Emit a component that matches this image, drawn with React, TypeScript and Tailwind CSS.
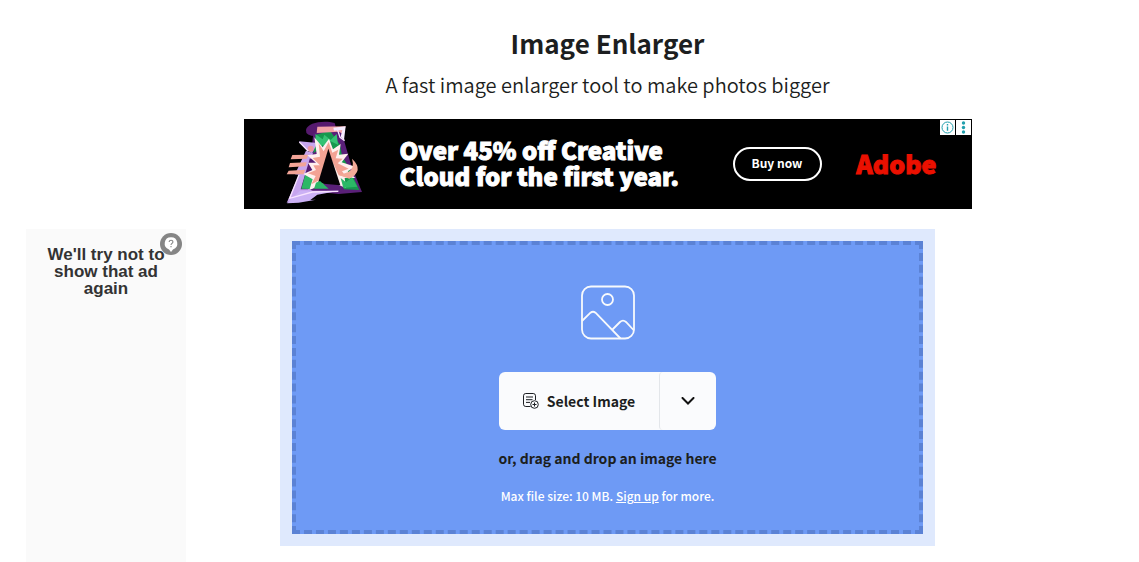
import type { ReactNode } from "react";

function BannerArt() {
  return (
    <svg viewBox="0 0 300 300" className="h-[100px] w-[100px] shrink-0" aria-hidden="true">
      <path d="M78 48C82 26 130 18 164 27L168 42L112 48L108 66Q76 66 78 48Z" fill="#561a6e" />
      <path d="M100 58L182 44L214 155L246 234L176 240L58 228L92 130Z" fill="#5a2078" />
      <path d="M108 62L150 50L180 92L186 125L205 158L238 228L192 226L150 82L100 118Z" fill="#16984e" />
      <path d="M106 60L128 76L133 62L152 78L170 60L174 92L152 82L137 104L128 92L112 116Z" fill="#35c274" />
      <path d="M112 38L197 37L190 60L176 53L110 57Z" fill="#f3a3a7" />
      <path d="M160 41L197 37L192 78L182 68L187 48L162 50Z" fill="#f6ecff" />
      <path d="M57 82L113 87L96 118L80 108Z" fill="#c7a5ee" />
      <path d="M78 110L99 117L66 215L112 238L45 253L20 267L57 182L45 181Z" fill="#c7a5ee" />
      <path d="M37 123L85 122L80 134L32 136ZM30 147L80 145L77 157L26 160ZM26 170L76 167L71 181L20 181Z" fill="#f2a497" />
      <path d="M90 132L107 153L84 226L62 226Z" fill="#541b70" />
      <path d="M77 177L105 190L99 225L64 224Z" fill="#2bb866" />
      <path d="M103 70L128 100L147 74L159 106L182 90L177 122L205 119L185 145L226 158L203 172L226 192L194 192L198 222L176 213L150 140L120 197L132 210L88 228L98 196L70 180L97 168L84 146L108 146L82 124L110 120Z" fill="#fff0ef" />
      <path d="M116 88L131 112L146 84L157 116L175 107L167 133L188 134L173 148L206 164L186 172L198 188L176 184L148 122L118 199L94 211L107 186L84 178L108 168L100 154L120 154L98 132L120 128Z" fill="#f3a294" />
      <path d="M145 104L181 214L114 208Z" fill="#050206" />
      <path d="M216 134Q254 170 208 194L178 184L205 174Q225 162 216 134Z" fill="#f4aa98" />
      <path d="M182 192L198 205L216 190L232 218L190 222Z" fill="#2bb866" />
      <path d="M60 230L178 230L112 242L91 258L108 257L56 266L21 268Z" fill="#cbb1f5" />
      <circle cx="92" cy="104" r="9" fill="#ee98a1" />
      <path d="M108 206L120 201L146 224L102 224Z" fill="#2bb866" />
      <path d="M58 84L85 112M57 182L29 253L97 234L175 232M171 42L180 70L194 80" fill="none" stroke="#f8e3ff" strokeWidth="4" />
    </svg>
  );
}

function AdBanner() {
  return (
    <section
      aria-label="Advertisement"
      className="relative flex h-[90px] w-full max-w-[728px] items-center overflow-hidden bg-black pr-[35px] pl-9 text-white"
    >
      <BannerArt />
      <p className="ml-5 w-[333px] pb-0.5 text-[24px] leading-[26px] font-black whitespace-nowrap [-webkit-text-stroke:1px_white]">
        Over 45% off Creative
        <br />
        Cloud for the first year.
      </p>
      <button
        type="button"
        className="h-[34px] w-[89px] shrink-0 rounded-full border-2 border-white pb-0.5 text-[12px] leading-none font-bold"
      >
        Buy now
      </button>
      <span className="ml-auto pb-0.5 text-[25px] leading-none font-black text-[#eb1000] [-webkit-text-stroke:1px_#eb1000]">
        Adobe
      </span>
      <div className="absolute top-px right-px flex h-[15px] gap-px">
        <button type="button" aria-label="About this ad" className="w-[15px] bg-white">
          <svg viewBox="0 0 15 15" className="size-[15px]">
            <circle cx="7.5" cy="7.5" r="5.5" fill="none" stroke="#22a0ae" />
            <path d="M7.5 6.5v4.2M7.5 4v1.4" stroke="#22a0ae" strokeWidth="1.4" />
          </svg>
        </button>
        <button type="button" aria-label="Ad options" className="w-[15px] bg-white">
          <svg viewBox="0 0 15 15" className="size-[15px]" fill="#22a0ae">
            <circle cx="7.5" cy="3" r="1.7" />
            <circle cx="7.5" cy="7.5" r="1.7" />
            <circle cx="7.5" cy="12" r="1.7" />
          </svg>
        </button>
      </div>
    </section>
  );
}

function SideNotice() {
  return (
    <aside className="relative bg-[#fafafa] px-5 pt-[17px] text-center font-['Liberation_Sans',Arial,sans-serif]">
      <p className="text-[17px] leading-[17px] font-bold text-[#333]">We'll try not to show that ad again</p>
      <button type="button" aria-label="Why this ad?" className="absolute top-1 right-1">
        <svg viewBox="0 0 22 22" className="size-[22px]">
          <circle cx="11" cy="11" r="11" fill="#858585" />
          <path d="M11 4.3a6.2 6.2 0 0 0-2 12.1l2 2.6 2-2.6a6.2 6.2 0 0 0-2-12.1Z" fill="#fff" />
          <path d="M9.2 9c0-2.4 3.8-2.3 3.7 0 0 1.4-1.9 1.4-1.9 3M11 13v1.2" fill="none" stroke="#858585" strokeWidth="1.1" />
        </svg>
      </button>
    </aside>
  );
}

function PictureIcon() {
  return (
    <svg viewBox="0 0 56 56" className="size-14" fill="none" stroke="#f8fafc" strokeWidth="1.8" aria-hidden="true">
      <rect x="2" y="1.5" width="52" height="52" rx="9" />
      <circle cx="27.5" cy="14.5" r="5.5" />
      <path d="M2 36 10.500 27.700q2.500-2 5 0L40.500 53.500M32 45l8-8q3-2.700 6 0l8 8.500" />
    </svg>
  );
}

function AddFileIcon() {
  return (
    <svg viewBox="0 0 16 16" className="size-4" fill="none" stroke="#1c1f23" aria-hidden="true">
      <path d="M7.500 13.500H2.800Q.500 13.500 .500 11.200V2.800Q.500.500 2.800.500h7.400q2.300 0 2.300 2.300V7M3 4h7M3 6.700h6.500M3 9.400h4" />
      <circle cx="11.500" cy="11.500" r="3.800" />
      <path d="M11.500 9.500v4M9.500 11.500h4" />
    </svg>
  );
}

function DropZone({ children }: { children: ReactNode }) {
  return (
    <div className="w-full max-w-[655px] bg-[#dfe9fd] p-3">
      <div className="flex flex-col items-center border-4 border-dashed border-[#5b82d5] bg-[#6e9af5] pt-10 pb-6">
        {children}
      </div>
    </div>
  );
}

export default function App() {
  return (
    <div className="grid min-h-screen grid-cols-[160px_1fr] grid-rows-[auto_1fr] pr-[110px] pl-[26px] font-['Noto_Sans_CJK_SC','Source_Sans_3',sans-serif] text-[#1c1e20]">
      <header className="col-start-2 flex flex-col items-center pt-6">
        <h1 className="text-[26px] leading-[38px] font-bold">Image Enlarger</h1>
        <p className="mt-1.5 text-[20px] leading-[34px] font-[350]">A fast image enlarger tool to make photos bigger</p>
        <div className="mt-[17px] mb-5 flex w-full justify-center">
          <AdBanner />
        </div>
      </header>
      <SideNotice />
      <main className="flex flex-col items-center">
        <DropZone>
          <PictureIcon />
          <div className="mt-[31px] flex h-[58px] overflow-hidden rounded-md bg-[#fafbfd]">
            <button type="button" className="flex w-40 items-center justify-center gap-2 text-[14px] font-bold">
              <AddFileIcon />
              Select Image
            </button>
            <button
              type="button"
              aria-label="More sources"
              className="flex w-[57px] items-center justify-center rounded-l-sm border-l border-[#e3e6ea]"
            >
              <svg viewBox="0 0 14 8" className="h-2 w-3.5" fill="none" stroke="#111" strokeWidth="2" aria-hidden="true">
                <path d="m1.500 1 5.500 5.500L12.500 1" strokeLinecap="round" />
              </svg>
            </button>
          </div>
          <p className="mt-4 text-[14px] leading-6 font-bold">or, drag and drop an image here</p>
          <p className="mt-4 text-[12px] leading-5 font-medium text-white">
            Max file size: 10 MB.{" "}
            <a href="#signup" className="underline">
              Sign up
            </a>{" "}
            for more.
          </p>
        </DropZone>
      </main>
    </div>
  );
}
